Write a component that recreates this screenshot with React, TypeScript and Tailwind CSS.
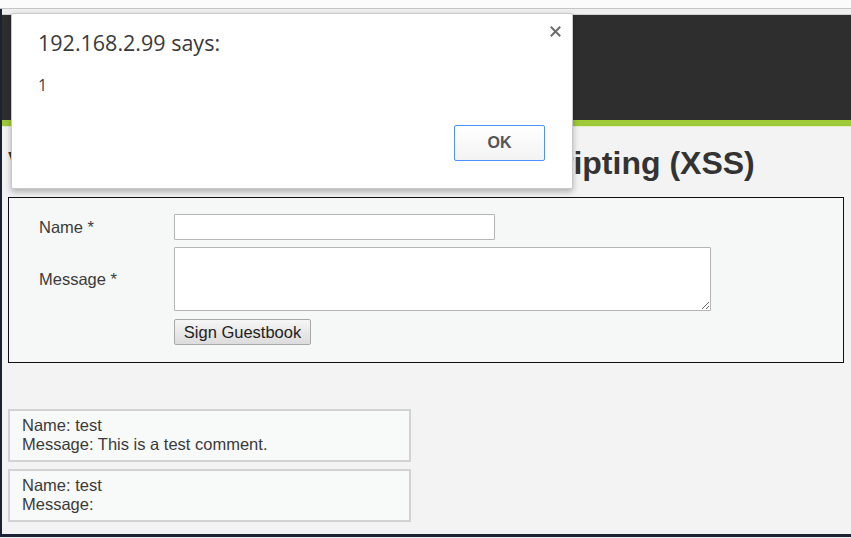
import React from "react";

const entries = [
  { name: "test", message: "This is a test comment." },
  { name: "test", message: "" },
];

function AlertDialog() {
  return (
    <div className="absolute left-[11px] top-[13px] w-[562px] h-[176px] bg-white border border-[#c9c9c9] rounded-[2px] shadow-[0_3px_6px_rgba(0,0,0,0.28)] font-['Open_Sans',sans-serif]">
      <div className="flex justify-between pl-[26px] pr-[11px] pt-[15px]">
        <p className="text-[21.5px] leading-[28px] text-[#3a3a3a]">192.168.2.99 says:</p>
        <svg width="11" height="11" viewBox="0 0 11 11" className="mt-[-3px]">
          <path d="M1.5 1.5 L9.5 9.5 M9.5 1.5 L1.5 9.5" stroke="#6b6b6b" strokeWidth="2" strokeLinecap="square" />
        </svg>
      </div>
      <p className="pl-[26px] mt-[17px] text-[16px] leading-[22px] text-[#444]">1</p>
      <div className="flex justify-end pr-[27px] mt-[29px]">
        <button
          type="button"
          className="w-[91px] h-[36px] rounded-[2px] border border-[#4d90fe] bg-gradient-to-b from-white to-[#f3f3f3] text-[16px] font-bold text-[#555] font-['Liberation_Sans',sans-serif]"
        >
          OK
        </button>
      </div>
    </div>
  );
}

export default function App() {
  return (
    <div className="relative w-[851px] h-[538px] overflow-hidden bg-[#f3f3f3] font-['Liberation_Sans',Arial,sans-serif] text-[#3b3b3b]">
      <div className="h-[9px] bg-[#fbfbfb] border-b border-[#c4c4c4]" />
      <div className="h-[528px] flex flex-col border-l-2 border-b-[3px] border-[#1b2233]">
        <div className="h-[6px] bg-[#efefef] border-b border-[#d0d0d0]" />
        <div className="h-[105px] bg-[#2e2e2e]" />
        <div className="h-[6px] bg-[#9dca36]" />
        <div className="h-px bg-[#e2edc6]" />

        <div className="flex-1 pl-[6px] pr-[7px]">
          <h1 className="mt-[18px] text-[32px] leading-[37px] font-bold text-[#333] whitespace-nowrap">
            <span className="[word-spacing:6.5px]">Vulnerability: Stored Cross Site Scr</span>ipting (XSS)
          </h1>

          <div className="mt-[15px] border border-[#111] bg-[#f6f7f7] pl-[30px] pt-[16px] pb-[17px]">
            <div className="flex items-center h-[26px]">
              <label className="w-[135px] text-[16.5px]">Name *</label>
              <input
                type="text"
                className="w-[321px] h-[26px] bg-white border border-[#b5b5b5] rounded-[1px]"
              />
            </div>
            <div className="flex items-center mt-[7px]">
              <label className="w-[135px] text-[16.5px]">Message *</label>
              <textarea className="w-[537px] h-[64px] bg-white border border-[#b5b5b5] rounded-[1px] resize" />
            </div>
            <div className="flex mt-[8px] pl-[135px]">
              <button
                type="button"
                className="w-[137px] h-[26px] rounded-[2px] border border-[#a8a8a8] bg-gradient-to-b from-[#f6f6f6] to-[#dcdcdc] text-[16.5px] text-[#222]"
              >
                Sign Guestbook
              </button>
            </div>
          </div>

          <div className="mt-[46px] flex flex-col gap-[7px]">
            {entries.map((e, i) => (
              <div
                key={i}
                className="w-[403px] border-2 border-[#d2d2d2] bg-[#f8f9f9] pl-[12px] pt-[5px] pb-[6px] text-[16.5px] leading-[19px]"
              >
                <div>Name: {e.name}</div>
                <div>Message: {e.message}</div>
              </div>
            ))}
          </div>
        </div>
      </div>

      <AlertDialog />
    </div>
  );
}
